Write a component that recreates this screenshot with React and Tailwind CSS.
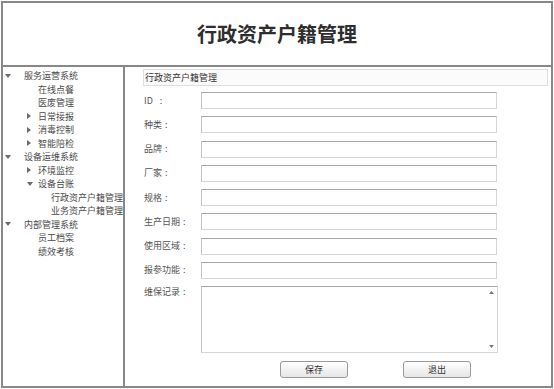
const FONT = { fontFamily: '"Noto Sans CJK SC", "Noto Sans", sans-serif' };

const tree = [
  { label: "服务运营系统", depth: 0, arrow: "down" },
  { label: "在线点餐", depth: 1 },
  { label: "医废管理", depth: 1 },
  { label: "日常接报", depth: 1, arrow: "right" },
  { label: "消毒控制", depth: 1, arrow: "right" },
  { label: "智能陪检", depth: 1, arrow: "right" },
  { label: "设备运维系统", depth: 0, arrow: "down" },
  { label: "环境监控", depth: 1, arrow: "right" },
  { label: "设备台账", depth: 1, arrow: "down" },
  { label: "行政资产户籍管理", depth: 2 },
  { label: "业务资产户籍管理", depth: 2 },
  { label: "内部管理系统", depth: 0, arrow: "down" },
  { label: "员工档案", depth: 1 },
  { label: "绩效考核", depth: 1 },
];

const indent = {
  0: "w-[21px] pl-[2px]",
  1: "w-[35px] pl-[24px]",
  2: "w-[49px]",
};

const fields = ["ID", "种类", "品牌", "厂家", "规格", "生产日期", "使用区域", "报参功能"];

function Arrow({ dir }) {
  if (dir === "down") {
    return (
      <svg width="6" height="4" viewBox="0 0 6 4" className="block">
        <path d="M0 0 L6 0 L3 4 Z" fill="#6b6b6b" />
      </svg>
    );
  }
  return (
    <svg width="4" height="6" viewBox="0 0 4 6" className="block">
      <path d="M0 0 L4 3 L0 6 Z" fill="#6b6b6b" />
    </svg>
  );
}

function Label({ text }) {
  return (
    <span className="w-[58px] pl-[1px] leading-[12px]">
      {text}
      <span className={text === "ID" ? "ml-[7px]" : "ml-[3px]"}>:</span>
    </span>
  );
}

function Input() {
  return (
    <div className="h-[17px] w-[296px] border border-[#d6d6d6] border-t-[#a8a8a8] border-l-[#c4c4c4] bg-white" />
  );
}

export default function App() {
  return (
    <div className="h-[389px] w-[554px] bg-white pl-[1px] pt-[1px]" style={FONT}>
      <div className="flex h-[387px] w-[552px] flex-col border-2 border-[#888]">
        <header className="flex h-[64px] items-center justify-center border-b-2 border-[#888]">
          <h1 className="text-[20px] font-bold leading-none text-[#2e2e2e]">行政资产户籍管理</h1>
        </header>

        <div className="flex flex-1">
          <nav className="w-[122px] border-r-2 border-[#888] pt-[2px] text-[9px] text-[#4a4a4a]">
            {tree.map((item) => (
              <div key={item.label} className="flex h-[13.5px] items-center whitespace-nowrap">
                <span className={`flex items-center ${indent[item.depth]}`}>
                  {item.arrow && <Arrow dir={item.arrow} />}
                </span>
                <span className="leading-none">{item.label}</span>
              </div>
            ))}
          </nav>

          <main className="flex-1 pl-[18px] pt-[2px] text-[9px] text-[#555]">
            <div className="flex h-[17px] w-[405px] items-center border border-[#dedede] bg-[#fbfbfb] pl-[1px] text-[#333]">
              行政资产户籍管理
            </div>

            <div className="mt-[6px] flex flex-col gap-[7.25px]">
              {fields.map((f) => (
                <div key={f} className="flex items-center">
                  <Label text={f} />
                  <Input />
                </div>
              ))}
              <div className="flex items-start">
                <Label text="维保记录" />
                <div className="flex h-[67px] w-[297px] justify-end border border-[#d6d6d6] border-t-[#a8a8a8] border-l-[#c4c4c4] bg-white">
                  <div className="flex w-[12px] flex-col items-center justify-between py-[4px]">
                    <svg width="5" height="3" viewBox="0 0 5 3">
                      <path d="M0 3 L5 3 L2.5 0 Z" fill="#777" />
                    </svg>
                    <svg width="5" height="3" viewBox="0 0 5 3">
                      <path d="M0 0 L5 0 L2.5 3 Z" fill="#777" />
                    </svg>
                  </div>
                </div>
              </div>
            </div>

            <div className="ml-[137px] mt-[8px] flex gap-[55px]">
              <button
                type="button"
                className="h-[17px] w-[68px] rounded-[3px] border border-[#9a9a9a] bg-gradient-to-b from-white to-[#e6e6e6] text-[9px] leading-none text-[#333]"
              >
                保存
              </button>
              <button
                type="button"
                className="h-[17px] w-[68px] rounded-[3px] border border-[#9a9a9a] bg-gradient-to-b from-white to-[#e6e6e6] text-[9px] leading-none text-[#333]"
              >
                退出
              </button>
            </div>
          </main>
        </div>
      </div>
    </div>
  );
}
